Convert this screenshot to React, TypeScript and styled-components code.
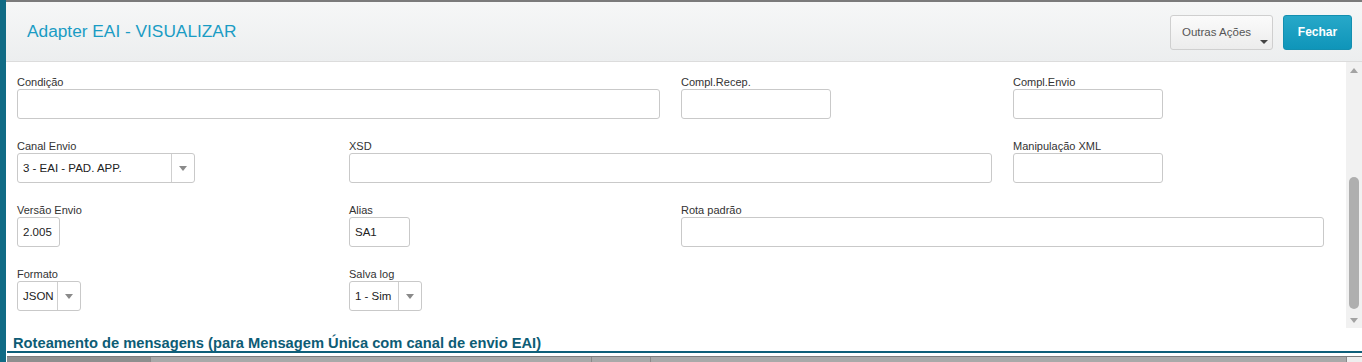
import styled, { createGlobalStyle } from "styled-components";

const GlobalStyle = createGlobalStyle`
  html, body {
    margin: 0;
    padding: 0;
    background: #ffffff;
    font-family: "Liberation Sans", Arial, sans-serif;
  }
`;

type FieldDef = {
  label: string;
  col: number;
  span?: number;
  width?: number;
  value?: string;
  select?: boolean;
};

const rows: FieldDef[][] = [
  [
    { label: "Condição", col: 1, span: 2 },
    { label: "Compl.Recep.", col: 3, width: 150 },
    { label: "Compl.Envio", col: 4, width: 150 },
  ],
  [
    { label: "Canal Envio", col: 1, width: 178, value: "3 - EAI - PAD. APP.", select: true },
    { label: "XSD", col: 2, span: 2 },
    { label: "Manipulação XML", col: 4, width: 150 },
  ],
  [
    { label: "Versão Envio", col: 1, width: 43, value: "2.005" },
    { label: "Alias", col: 2, width: 61, value: "SA1" },
    { label: "Rota padrão", col: 3, span: 2 },
  ],
  [
    { label: "Formato", col: 1, width: 64, value: "JSON", select: true },
    { label: "Salva log", col: 2, width: 73, value: "1 - Sim", select: true },
  ],
];

const gridCells = [
  { w: 143, tone: "#8f8f8f" },
  { w: 440, tone: "#a9a9a9" },
  { w: 58, tone: "#a9a9a9" },
  { w: 695, tone: "#a9a9a9" },
];

const App = () => {
  return (
    <>
      <GlobalStyle />
      <Page>
        <LeftBar />
        <Main>
          <Header>
            <Title>Adapter EAI - VISUALIZAR</Title>
            <Actions>
              <MoreButton>
                Outras Ações
                <Caret />
              </MoreButton>
              <CloseButton>Fechar</CloseButton>
            </Actions>
          </Header>

          <Body>
            <Form>
              {rows.flat().map((f, i) => (
                <Field key={i} $col={f.col} $span={f.span ?? 1}>
                  <Label>{f.label}</Label>
                  <Control $width={f.width}>
                    <Value>{f.value ?? ""}</Value>
                    {f.select && (
                      <DropButton>
                        <DropArrow />
                      </DropButton>
                    )}
                  </Control>
                </Field>
              ))}
            </Form>
            <ScrollTrack>
              <ScrollArrow $dir="up" />
              <ThumbSpacer />
              <Thumb />
              <Filler />
              <ScrollArrow $dir="down" />
            </ScrollTrack>
          </Body>

          <SectionTitle>
            Roteamento de mensagens (para Mensagem Única com canal de envio EAI)
          </SectionTitle>

          <GridHead>
            {gridCells.map((c, i) => (
              <GridCell key={i} $w={c.w} $tone={c.tone} />
            ))}
            <GridRest />
          </GridHead>
        </Main>
      </Page>
    </>
  );
};

export default App;

const Page = styled.div`
  display: flex;
  width: 1362px;
  height: 362px;
  overflow: hidden;
`;

const LeftBar = styled.div`
  width: 6px;
  flex-shrink: 0;
  background: #106b85;
`;

const Main = styled.div`
  flex: 1;
  display: flex;
  flex-direction: column;
  border-top: 2px solid #7b7b7b;
`;

const Header = styled.header`
  height: 59px;
  flex-shrink: 0;
  display: flex;
  align-items: center;
  justify-content: space-between;
  padding: 0 10px 0 21px;
  background: linear-gradient(#f6f7f7, #eceeef);
  border-bottom: 1px solid #dcdcdc;
`;

const Title = styled.h1`
  margin: 0;
  font-size: 17.3px;
  font-weight: normal;
  color: #1a9cc4;
`;

const Actions = styled.div`
  display: flex;
  gap: 10px;
  margin-top: 1px;
`;

const MoreButton = styled.div`
  position: relative;
  width: 103px;
  height: 35px;
  box-sizing: border-box;
  display: flex;
  align-items: center;
  padding-left: 11px;
  font-size: 11.5px;
  color: #555;
  background: linear-gradient(#fbfbfb, #ececec);
  border: 1px solid #cfcfcf;
  border-radius: 3px;
`;

const Caret = styled.span`
  position: absolute;
  right: 4px;
  bottom: 5px;
  width: 0;
  height: 0;
  border-left: 4px solid transparent;
  border-right: 4px solid transparent;
  border-top: 4px solid #444;
`;

const CloseButton = styled.div`
  width: 69px;
  height: 35px;
  box-sizing: border-box;
  display: flex;
  align-items: center;
  justify-content: center;
  font-size: 12px;
  font-weight: bold;
  color: #fff;
  background: linear-gradient(#27a8c9, #0f95b9);
  border: 1px solid #138fb0;
  border-radius: 3px;
`;

const Body = styled.div`
  height: 266px;
  flex-shrink: 0;
  display: flex;
`;

const Form = styled.div`
  flex: 1;
  display: grid;
  grid-template-columns: repeat(4, 311px);
  column-gap: 21px;
  row-gap: 20px;
  align-content: start;
  padding: 13px 0 0 11px;
`;

const Field = styled.div<{ $col: number; $span: number }>`
  grid-column: ${({ $col, $span }) => `${$col} / span ${$span}`};
  display: flex;
  flex-direction: column;
`;

const Label = styled.label`
  font-size: 11px;
  line-height: 14px;
  color: #333;
`;

const Control = styled.div<{ $width?: number }>`
  width: ${({ $width }) => ($width ? `${$width}px` : "100%")};
  height: 30px;
  box-sizing: border-box;
  display: flex;
  align-items: center;
  border: 1px solid #c9c9c9;
  border-radius: 3px;
  background: #fff;
`;

const Value = styled.span`
  flex: 1;
  padding-left: 5px;
  font-size: 11.5px;
  color: #222;
  white-space: nowrap;
`;

const DropButton = styled.div`
  width: 22px;
  height: 100%;
  display: flex;
  align-items: center;
  justify-content: center;
  border-left: 1px solid #cfcfcf;
`;

const DropArrow = styled.span`
  width: 0;
  height: 0;
  border-left: 4px solid transparent;
  border-right: 4px solid transparent;
  border-top: 5px solid #8a8a8a;
`;

const ScrollTrack = styled.div`
  width: 16px;
  display: flex;
  flex-direction: column;
  align-items: center;
  background: #f1f1f1;
`;

const ScrollArrow = styled.div<{ $dir: "up" | "down" }>`
  width: 0;
  height: 0;
  margin: ${({ $dir }) => ($dir === "up" ? "6px 0 4px" : "4px 0 5px")};
  border-left: 4px solid transparent;
  border-right: 4px solid transparent;
  ${({ $dir }) =>
    $dir === "up"
      ? "border-bottom: 5px solid #a3a3a3;"
      : "border-top: 5px solid #a3a3a3;"}
`;

const ThumbSpacer = styled.div`
  height: 100px;
`;

const Thumb = styled.div`
  width: 10px;
  height: 132px;
  border-radius: 5px;
  background: #afafaf;
`;

const Filler = styled.div`
  flex: 1;
`;

const SectionTitle = styled.h2`
  margin: 0 0 0 1px;
  padding: 7px 0 0 6px;
  height: 17px;
  font-size: 14.7px;
  line-height: 16px;
  font-weight: bold;
  color: #0d5c75;
  border-bottom: 2px solid #0f5f79;
  white-space: nowrap;
`;

const GridHead = styled.div`
  display: flex;
  margin: 3px 0 0 1px;
  height: 20px;
  border-top: 1px solid #7c7c7c;
`;

const GridCell = styled.div<{ $w: number; $tone: string }>`
  width: ${({ $w }) => $w}px;
  flex-shrink: 0;
  background: ${({ $tone }) => $tone};
  border-right: 1px solid #8a8a8a;
`;

const GridRest = styled.div`
  flex: 1;
  background: #eeeeee;
`;
